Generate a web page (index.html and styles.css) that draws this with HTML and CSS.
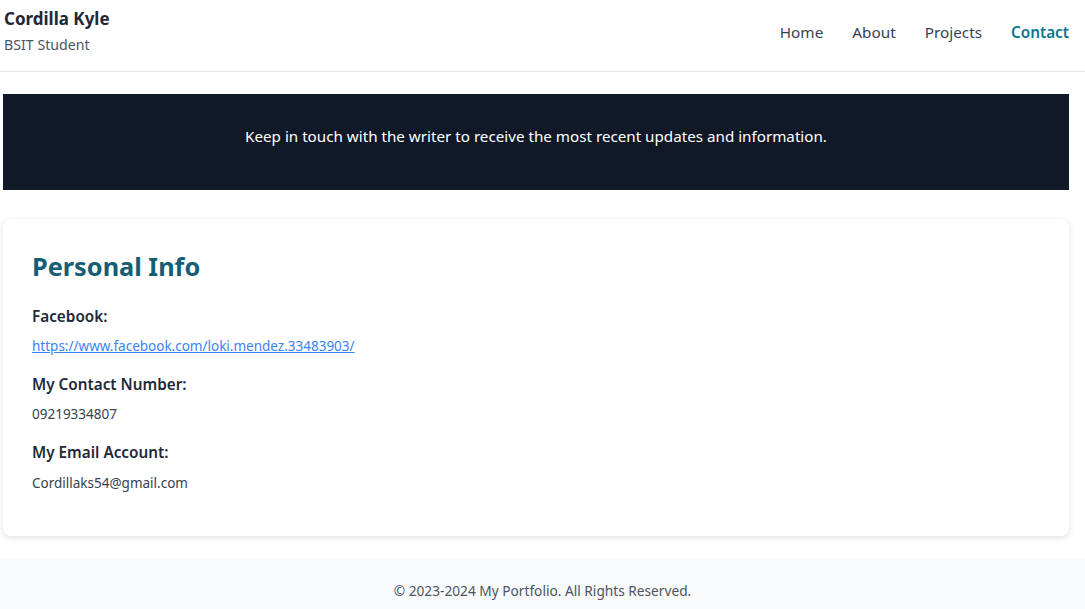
FILE: index.html
```html
<!DOCTYPE html>
<html lang="en">
<head>
<meta charset="utf-8">
<title>Contact - Cordilla Kyle</title>
<link rel="stylesheet" href="styles.css">
</head>
<body>
<header class="site-header">
  <div class="brand">
    <div class="brand-name">Cordilla Kyle</div>
    <div class="brand-sub">BSIT Student</div>
  </div>
  <nav class="nav">
    <a href="#" class="nav-link">Home</a>
    <a href="#" class="nav-link">About</a>
    <a href="#" class="nav-link">Projects</a>
    <a href="#" class="nav-link active">Contact</a>
  </nav>
</header>
<main class="main">
  <section class="banner">
    <p>Keep in touch with the writer to receive the most recent updates and information.</p>
  </section>
  <section class="card">
    <h2 class="card-title">Personal Info</h2>
    <h3 class="label">Facebook:</h3>
    <p class="value"><a href="#" class="link">https://www.facebook.com/loki.mendez.33483903/</a></p>
    <h3 class="label">My Contact Number:</h3>
    <p class="value">09219334807</p>
    <h3 class="label">My Email Account:</h3>
    <p class="value">Cordillaks54@gmail.com</p>
  </section>
</main>
<footer class="footer">
  <p>© 2023-2024 My Portfolio. All Rights Reserved.</p>
</footer>
</body>
</html>
```

FILE: styles.css
```css
* { box-sizing: border-box; }
body {
  margin: 0;
  font-family: "Noto Sans", "Open Sans", sans-serif;
  color: #1f2937;
  background: #ffffff;
}
.site-header {
  display: flex;
  justify-content: space-between;
  align-items: center;
  height: 72px;
  padding: 0 16px 0 4px;
  border-bottom: 1px solid #e5e7eb;
}
.brand { margin-top: -8px; }
.brand-name {
  font-size: 17px;
  font-weight: 700;
  line-height: 24px;
  color: #1f2937;
}
.brand-sub {
  font-size: 14.2px;
  line-height: 22px;
  margin-top: 3px;
  color: #4b5563;
}
.nav {
  display: flex;
  gap: 29px;
  margin-top: -8px;
}
.nav-link {
  font-size: 15.3px;
  color: #374151;
  text-decoration: none;
}
.nav-link.active {
  color: #0e7490;
  font-weight: 600;
}
.main {
  padding: 22px 16px 22px 3px;
}
.banner {
  height: 96px;
  background: #111827;
  color: #ffffff;
  display: flex;
  justify-content: center;
  padding-top: 31px;
}
.banner p {
  margin: 0;
  font-size: 15.2px;
  line-height: 22px;
}
.card {
  margin-top: 29px;
  padding: 27px 29px 41px;
  background: #ffffff;
  border-radius: 8px;
  box-shadow: 0 2px 6px rgba(0, 0, 0, 0.12);
}
.card-title {
  margin: 0 0 18px;
  font-size: 25.3px;
  line-height: 40px;
  font-weight: 700;
  color: #155e75;
}
.label {
  margin: 0;
  font-size: 15.3px;
  font-weight: 600;
  line-height: 24px;
  color: #1f2937;
}
.value {
  margin: 6px 0 14px;
  font-size: 13.5px;
  line-height: 24px;
  color: #374151;
}
.value:last-child { margin: 7px 0 0; }
.link { color: #3b82f6; }
.footer {
  background: #f8fafc;
  padding: 22px 0 21px;
  text-align: center;
}
.footer p {
  margin: 0;
  font-size: 13.7px;
  line-height: 22px;
  color: #4b5563;
}
```
